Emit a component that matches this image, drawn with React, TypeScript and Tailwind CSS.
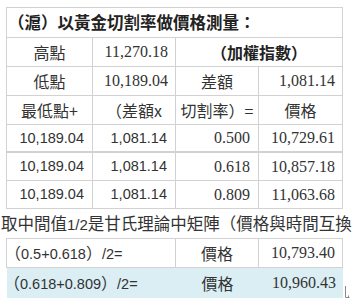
import React from "react";

const cjk = "font-['Noto_Sans_CJK_TC',sans-serif]";
const serif = "font-['Liberation_Serif','Noto_Sans_CJK_TC',serif]";
const sans = "font-['Liberation_Sans','Noto_Sans_CJK_TC',sans-serif]";
const bd = "border-[#d2d2d2]";

function C({
  className = "",
  children,
}: {
  className?: string;
  children?: React.ReactNode;
}) {
  return (
    <div className={`flex items-center whitespace-nowrap ${bd} ${className}`}>
      {children}
    </div>
  );
}

export default function App() {
  const c1 = "border-l border-r border-b";
  const cx = "border-r border-b";
  return (
    <div className="relative w-[353px] h-[306px] overflow-hidden bg-white text-[#333333] text-[16px] leading-none">
      <div className="pl-[6px] pt-[7px]">
        <div className="grid grid-cols-[87px_83px_83px_84px]">
          {/* title */}
          <C className={`col-span-4 h-[31px] border ${cjk} font-bold text-[16.5px] pl-[1px] text-[#222222]`}>
            （滬）以黃金切割率做價格測量：
          </C>

          {/* row 2 */}
          <C className={`${c1} h-[29px] justify-center ${cjk}`}>高點</C>
          <C className={`${cx} h-[29px] justify-end pr-[7px] ${serif}`}>11,270.18</C>
          <C className={`${cx} col-span-2 h-[29px] justify-center ${cjk} font-bold text-[#222222]`}>
            （加權指數）
          </C>

          {/* row 3 */}
          <C className={`${c1} h-[29px] justify-center ${cjk}`}>低點</C>
          <C className={`${cx} h-[29px] justify-end pr-[7px] ${serif}`}>10,189.04</C>
          <C className={`${cx} h-[29px] justify-center ${cjk}`}>差額</C>
          <C className={`${cx} h-[29px] justify-end pr-[7px] ${serif}`}>1,081.14</C>

          {/* row 4 */}
          <C className={`${c1} h-[29px] justify-center ${cjk}`}>最低點+</C>
          <C className={`${cx} h-[29px] justify-center ${cjk}`}>（差額x</C>
          <C className={`${cx} h-[29px] justify-center ${cjk}`}>切割率）=</C>
          <C className={`${cx} h-[29px] justify-center ${cjk}`}>價格</C>

          {/* row 5 */}
          <C className={`border-l border-r border-b-2 h-[28px] justify-end pr-[8px] ${sans} text-[14.5px]`}>10,189.04</C>
          <C className={`border-r border-b-2 h-[28px] justify-end pr-[8px] ${sans} text-[14.5px]`}>1,081.14</C>
          <C className={`border-r border-b-2 h-[28px] justify-end pr-[8px] ${serif}`}>0.500</C>
          <C className={`border-r border-b-2 h-[28px] justify-end pr-[7px] ${serif}`}>10,729.61</C>

          {/* row 6 */}
          <C className={`${c1} h-[28px] justify-end pr-[8px] ${sans} text-[14.5px]`}>10,189.04</C>
          <C className={`${cx} h-[28px] justify-end pr-[8px] ${sans} text-[14.5px]`}>1,081.14</C>
          <C className={`${cx} h-[28px] justify-end pr-[8px] ${serif}`}>0.618</C>
          <C className={`${cx} h-[28px] justify-end pr-[7px] ${serif}`}>10,857.18</C>

          {/* row 7 */}
          <C className={`${c1} h-[28px] justify-end pr-[8px] ${sans} text-[14.5px]`}>10,189.04</C>
          <C className={`${cx} h-[28px] justify-end pr-[8px] ${sans} text-[14.5px]`}>1,081.14</C>
          <C className={`${cx} h-[28px] justify-end pr-[8px] ${serif}`}>0.809</C>
          <C className={`${cx} h-[28px] justify-end pr-[7px] ${serif}`}>11,063.68</C>

          {/* row 8 */}
          <C className={`col-span-4 min-w-0 border-b h-[30px] ${cjk} text-[16.5px]`}>
            <span className="-ml-[5px]">
              取中間值<span className={`${sans} text-[15px]`}>1/2</span>是甘氏理論中矩陣（價格與時間互換
            </span>
          </C>

          {/* row 9 */}
          <C className={`${c1} col-span-2 h-[29px] ${cjk}`}>
            <span className="-ml-[2px]">
              （<span className={`${sans} text-[14.5px]`}>0.5+0.618</span>）
              <span className={`${sans} text-[14.5px]`}>/2=</span>
            </span>
          </C>
          <C className={`${cx} h-[29px] justify-center ${cjk}`}>價格</C>
          <C className={`${cx} h-[29px] justify-end pr-[7px] ${serif}`}>10,793.40</C>

          {/* row 10 */}
          <C className={`col-span-2 ml-[1px] h-[30px] bg-[#daeef3] ${cjk}`}>
            <span className="-ml-[3px]">
              （<span className={`${sans} text-[14.5px]`}>0.618+0.809</span>）
              <span className={`${sans} text-[14.5px]`}>/2=</span>
            </span>
          </C>
          <C className={`h-[30px] justify-center bg-[#daeef3] ${cjk}`}>價格</C>
          <C className={`h-[30px] justify-end pr-[7px] bg-[#daeef3] ${serif}`}>10,960.43</C>
        </div>
      </div>
      <svg
        className="absolute left-[344px] top-[286px]"
        width="8"
        height="13"
        viewBox="0 0 8 13"
        fill="none"
        stroke="#8a8a8a"
        strokeWidth="1"
      >
        <path d="M1.5 0 V11.5 H5.5" />
        <path d="M4.5 9.5 V11.5" />
      </svg>
    </div>
  );
}
